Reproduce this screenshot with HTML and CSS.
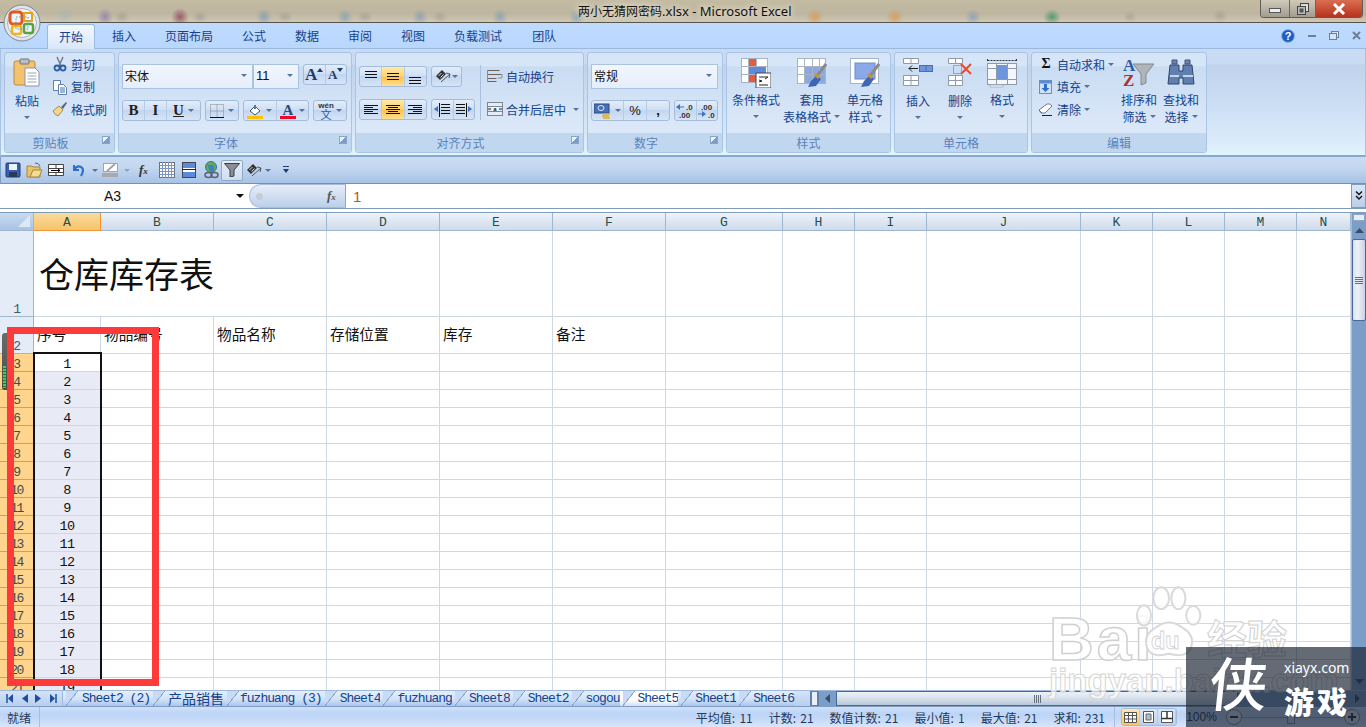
FILE: index.html
```
<!DOCTYPE html>
<html lang="zh">
<head>
<meta charset="utf-8">
<title>两小无猜网密码.xlsx - Microsoft Excel</title>
<link rel="stylesheet" href="styles.css">
</head>
<body>
<div class="app">
  <header class="titlebar">
    <div class="doc-title"><span class="doc-cjk">两小无猜网密码</span>.xlsx - Microsoft Excel</div>
    <div class="winbtns">
      <div class="wb wb-min"><svg width="12" height="6"><rect x=".5" y=".5" width="11" height="4" fill="#eee" stroke="#555"/></svg></div>
      <div class="wb wb-max"><svg width="12" height="12"><rect x="3.5" y=".5" width="8" height="8" fill="#ddd" stroke="#444"/><rect x=".5" y="3.5" width="8" height="8" fill="#bbb" stroke="#444"/><rect x="2.5" y="5.5" width="4" height="4" fill="#555"/></svg></div>
      <div class="wb wb-close"><svg width="14" height="12"><path d="M2 1l10 10M12 1L2 11" stroke="#fff" stroke-width="3"/></svg></div>
    </div>
  </header>

  <nav class="tabbar">
    <div class="tab tab-on">开始</div>
    <div class="tab">插入</div>
    <div class="tab">页面布局</div>
    <div class="tab">公式</div>
    <div class="tab">数据</div>
    <div class="tab">审阅</div>
    <div class="tab">视图</div>
    <div class="tab">负载测试</div>
    <div class="tab tab-last">团队</div>
    <div class="appbtns">
      <svg width="14" height="14" viewBox="0 0 14 14"><circle cx="7" cy="7" r="6.5" fill="#1e5fc4" stroke="#8fb4e8"/><text x="7" y="11" class="help-q">?</text></svg>
      <svg width="8" height="3"><rect width="8" height="2" y="1" fill="#6c7f99"/></svg>
      <svg width="10" height="9"><rect x="2.5" y=".5" width="7" height="6" fill="#d5e3f5" stroke="#6c7f99"/><rect x=".5" y="2.5" width="7" height="6" fill="#d5e3f5" stroke="#6c7f99"/></svg>
      <svg width="9" height="9"><path d="M1 1l7 7M8 1L1 8" stroke="#6c7f99" stroke-width="2"/></svg>
    </div>
  </nav>

  <section class="ribbon">
    <div class="group g1">
      <div class="gbody">
        <div class="tall w34">
          <svg class="i30" width="28" height="30" viewBox="0 0 28 30"><rect x="1" y="3" width="21" height="24" rx="2" fill="#f3c26f" stroke="#b98a3a"/><rect x="7" y="1" width="9" height="5" rx="1" fill="#b9bec6" stroke="#6d7580"/><path d="M12 10h10l4 4v14H12z" fill="#fff" stroke="#8795a8"/><path d="M14.500 15h9M14.500 18h9M14.500 21h9M14.500 24h9" stroke="#9aa5b5"/></svg>
          <div class="tl">粘贴</div>
          <div class="tl"><span class="caret"></span></div>
        </div>
        <div class="smcol ml8">
          <div class="sm"><svg class="i16" width="16" height="16" viewBox="0 0 16 16"><path d="M5 1l4 9M11 1L7 10" stroke="#6c7a8c" stroke-width="1.500"/><circle cx="5" cy="12" r="2.500" fill="none" stroke="#2e5da8" stroke-width="1.800"/><circle cx="11" cy="12" r="2.500" fill="none" stroke="#2e5da8" stroke-width="1.800"/></svg><span>剪切</span></div>
          <div class="sm"><svg class="i16" width="16" height="16" viewBox="0 0 16 16"><path d="M1.500 1.500h7v10h-7z" fill="#fff" stroke="#5d80b0"/><path d="M6.500 5.500h5l3 3v7h-8z" fill="#fff" stroke="#5d80b0"/><path d="M8 9h5M8 11h5M8 13h5" stroke="#3a6db0"/></svg><span>复制</span></div>
          <div class="sm"><svg class="i16" width="16" height="16" viewBox="0 0 16 16"><path d="M1 10l6-5 4 4-5 6q-3-1-5-5z" fill="#f0d88c" stroke="#a98b3c"/><path d="M9 6l5-5 1 1-4 6z" fill="#54688c"/></svg><span>格式刷</span></div>
        </div>
      </div>
      <div class="glabel gl-launch">剪贴板<span class="launch"></span></div>
    </div>

    <div class="group g2">
      <div class="gbody col pl3">
        <div class="frow mt11">
          <div class="combo w130">宋体<span class="caret"></span></div>
          <div class="combo w46 numtxt">11<span class="caret"></span></div>
          <div class="cluster ml4 w44">
            <div class="cell f1"><span class="growA">A</span><svg width="6" height="4" class="up"><path d="M0 4l3-4 3 4z" fill="#1d3d70"/></svg></div>
            <div class="cell f1"><span class="shrinkA">A</span><svg width="6" height="4" class="up"><path d="M0 0l3 4 3-4z" fill="#1d3d70"/></svg></div>
          </div>
        </div>
        <div class="frow mt11 gap4">
          <div class="cluster w79">
            <div class="cell f1"><b class="fmt">B</b></div>
            <div class="cell f1"><i class="fmt">I</i></div>
            <div class="cell f32"><u class="fmt fmtu">U</u><span class="caret ml4"></span></div>
          </div>
          <div class="cluster wc34">
            <div class="cell f1"><svg width="14" height="14"><path d="M.5.500h13v13H.5zM7 .5v13M.5 7h13" fill="none" stroke="#7c8794" stroke-dasharray="1 1"/><path d="M0 13.500h14" stroke="#111"/></svg><span class="caret ml4"></span></div>
          </div>
          <div class="cluster w66">
            <div class="cell f1"><svg width="16" height="16"><path d="M3 8l5-5 5 5-5 4z" fill="#fff" stroke="#44556e"/><path d="M7 2h2v4H7z" fill="#4a78bc"/><rect y="13" width="16" height="3" fill="#ffc000"/></svg><span class="caret ml3"></span></div>
            <div class="cell f1"><svg width="16" height="16"><text x="8" y="12" class="acolor">A</text><rect y="13" width="16" height="3" fill="#ee0a24"/></svg><span class="caret ml3"></span></div>
          </div>
          <div class="cluster wc34">
            <div class="cell f1"><span class="wen"><em>wén</em>文</span><span class="caret ml2"></span></div>
          </div>
        </div>
      </div>
      <div class="glabel gl-launch">字体<span class="launch"></span></div>
    </div>

    <div class="group g3">
      <div class="gbody pl3">
        <div class="col">
          <div class="frow mt13 gap4">
            <div class="cluster w68">
              <div class="cell f1"><svg width="14" height="14"><path d="M1 1.500h12M1 4.500h12M1 7.500h12" stroke="#111"/></svg></div>
              <div class="cell f1 hot"><svg width="14" height="14"><path d="M1 3.500h12M1 6.500h12M1 9.500h12" stroke="#111"/></svg></div>
              <div class="cell f1"><svg width="14" height="14"><path d="M1 7.500h12M1 10.500h12M1 13.500h12" stroke="#111"/></svg></div>
            </div>
            <div class="cluster w31">
              <div class="cell f1"><svg width="17" height="15" viewBox="0 0 17 15"><path d="M1 7l6-6 4 4-6 6z" fill="#333"/><path d="M3.500 7l3-3M5.500 8.500l3-3" stroke="#ddd"/><path d="M6 13l9-8M11 4l4 1-1 4" stroke="#555" fill="none"/></svg><span class="caret"></span></div>
            </div>
          </div>
          <div class="frow mt12 gap4">
            <div class="cluster w68">
              <div class="cell f1"><svg width="14" height="12"><path d="M0 1.500h14M0 3.500h9M0 5.500h14M0 7.500h9M0 9.500h14" stroke="#111"/></svg></div>
              <div class="cell f1 hot"><svg width="14" height="12"><path d="M0 1.500h14M2 3.500h10M0 5.500h14M2 7.500h10M0 9.500h14" stroke="#111"/></svg></div>
              <div class="cell f1"><svg width="14" height="12"><path d="M0 1.500h14M5 3.500h9M0 5.500h14M5 7.500h9M0 9.500h14" stroke="#111"/></svg></div>
            </div>
            <div class="cluster w44">
              <div class="cell f1"><svg width="16" height="14"><path d="M7 1.500h9M7 4.500h9M7 7.500h9M7 10.500h9M5.500 0v14" stroke="#111"/><path d="M0 6l4-3v6z" fill="#3f74bd"/></svg></div>
              <div class="cell f1"><svg width="16" height="14"><path d="M0 1.500h9M0 4.500h9M0 7.500h9M0 10.500h9M10.500 0v14" stroke="#111"/><path d="M16 6l-4-3v6z" fill="#3f74bd"/></svg></div>
            </div>
          </div>
        </div>
        <div class="wrapcol">
          <div class="sm"><svg class="i16" width="16" height="14" viewBox="0 0 16 14"><path d="M.5 1.500h12M.5 5.500h14M.5 9.500h9M.5 12.500h9" stroke="#6e6259"/><path d="M.5 1v12M15 5v4h-4" stroke="#8a8f96" fill="none"/></svg><span>自动换行</span></div>
          <div class="sm mt11"><svg class="i16" width="16" height="14" viewBox="0 0 16 14"><rect x=".5" y=".5" width="15" height="13" fill="#e6ecf5" stroke="#7b8697"/><path d="M.5 4.500h15M.5 9.500h15" stroke="#7b8697"/><rect x="5" y="5" width="6" height="4" fill="#fff"/><path d="M1 7h3M12 7h3" stroke="#222"/><text x="8" y="9" class="tinya">a</text></svg><span>合并后居中</span><span class="caret ml7"></span></div>
        </div>
      </div>
      <div class="glabel gl-launch">对齐方式<span class="launch"></span></div>
    </div>

    <div class="group g4">
      <div class="gbody col pl3">
        <div class="frow mt11">
          <div class="combo w127">常规<span class="caret"></span></div>
        </div>
        <div class="frow mt11 gap4">
          <div class="cluster w79">
            <div class="cell f34"><svg width="18" height="16" viewBox="0 0 18 16"><rect y="1" width="15" height="9" fill="#4470b5" stroke="#2b4d86"/><ellipse cx="7" cy="5" rx="3" ry="2.500" fill="none" stroke="#dbe6f7"/><path d="M9 11h7M8 13h7M9 15h7" stroke="#e4a929" stroke-width="1.600"/></svg><span class="caret ml3"></span></div>
            <div class="cell f23 pct">%</div>
            <div class="cell f23 pct"><b>,</b></div>
          </div>
          <div class="cluster w44">
            <div class="cell f1 dec"><svg width="18" height="16" viewBox="0 0 18 16"><path d="M0 4l4-3v6z" fill="#3f74bd"/><path d="M4 4h4" stroke="#3f74bd"/><text x="10" y="7" class="dectx">.0</text><text x="3" y="15" class="dectx">.00</text></svg></div>
            <div class="cell f1 dec"><svg width="18" height="16" viewBox="0 0 18 16"><path d="M8 11L4 8v6z" fill="#3f74bd"/><path d="M0 11h4" stroke="#3f74bd"/><text x="3" y="7" class="dectx">.00</text><text x="10" y="15" class="dectx">.0</text></svg></div>
          </div>
        </div>
      </div>
      <div class="glabel gl-launch">数字<span class="launch"></span></div>
    </div>

    <div class="group g5">
      <div class="gbody tallrow pl3">
        <div class="tall w52">
          <svg class="i30 i29" width="30" height="30" viewBox="0 0 30 30"><rect x=".5" y=".5" width="26" height="24" fill="#fff" stroke="#a8b4c4"/><path d="M0 8.500h26M0 16.500h26M7.500 0v25M15.500 0v25" stroke="#a8b4c4"/><rect x="8" y="1" width="7" height="7" fill="#e85a3c"/><rect x="8" y="9" width="17" height="7" fill="#5e8bd9"/><rect x="8" y="17" width="7" height="7" fill="#e85a3c"/><rect x="15" y="15" width="15" height="15" fill="#fff" stroke="#445"/><path d="M18 19h9M18 22l3 1-3 1M27 19l-3 2M18 27h9" stroke="#222" fill="none"/></svg>
          <div class="tl">条件格式</div>
          <div class="tl"><span class="caret"></span></div>
        </div>
        <div class="tall w59">
          <svg class="i30 i29" width="30" height="30" viewBox="0 0 30 30"><rect x=".5" y=".5" width="28" height="25" fill="#fff" stroke="#a8b4c4"/><rect x="7" y="8" width="21" height="17" fill="#8ba9e0"/><path d="M0 8.500h28M0 16.500h28M7.500 0v25M15.500 0v25M22.500 0v25" stroke="#a8b4c4"/><path d="M29 6l-9 12" stroke="#8a8a8a" stroke-width="3"/><path d="M20 17l-6 6-3 6 8-1 5-7z" fill="#3f66b4"/><path d="M18 16l4 4" stroke="#c8943c" stroke-width="3"/></svg>
          <div class="tl">套用</div>
          <div class="tl">表格格式<span class="caret ml3"></span></div>
        </div>
        <div class="tall w40 ml4">
          <svg class="i30 i29" width="30" height="30" viewBox="0 0 30 30"><rect x=".5" y=".5" width="28" height="25" fill="#fff" stroke="#a8b4c4"/><rect x="5" y="5" width="20" height="16" fill="#8ba9e8" stroke="#6a8acb"/><path d="M29 6l-9 12" stroke="#8a8a8a" stroke-width="3"/><path d="M20 17l-6 6-3 6 8-1 5-7z" fill="#3f66b4"/><path d="M18 16l4 4" stroke="#c8943c" stroke-width="3"/></svg>
          <div class="tl">单元格</div>
          <div class="tl">样式<span class="caret ml3"></span></div>
        </div>
      </div>
      <div class="glabel">样式</div>
    </div>

    <div class="group g6">
      <div class="gbody tallrow pl2">
        <div class="tall w42">
          <svg class="i30" width="30" height="30" viewBox="0 0 30 30"><path d="M.5.500h15v5H.5zM.5 17.500h15v5H.5z M.5 22.500h15v5H.5z M8 .5v5M8 17.500v10" fill="#fff" stroke="#8e9aab"/><path d="M6 10.500h9M6 10.500l3-3M6 10.500l3 3" stroke="#222" fill="none"/><rect x="16.500" y="7.500" width="13" height="6" fill="#6f96dd" stroke="#4a6eb0"/><path d="M23 7.500v6" stroke="#4a6eb0"/></svg>
          <div class="tl">插入</div>
          <div class="tl"><span class="caret"></span></div>
        </div>
        <div class="tall w42">
          <svg class="i30" width="26" height="30" viewBox="0 0 26 30"><path d="M1.500.500h14v5h-14zM1.500 17.500h14v5h-14zM1.500 22.500h14v5h-14zM8.500.5v5M8.500 17.500v10" fill="#fff" stroke="#8e9aab"/><rect x="6.500" y="7.500" width="8" height="8" fill="none" stroke="#5b6b82" stroke-dasharray="1 1"/><path d="M14 6l10 10M24 6L14 16" stroke="#ee4a2a" stroke-width="2"/></svg>
          <div class="tl">删除</div>
          <div class="tl"><span class="caret"></span></div>
        </div>
        <div class="tall w42">
          <svg class="i30 i29" width="30" height="30" viewBox="0 0 30 30"><path d="M.5 2.500h29M.5 1v3M29.500 1v3" stroke="#333" stroke-dasharray="2 1"/><rect x=".5" y="5.500" width="29" height="21" fill="#f4f7fb" stroke="#8e9aab"/><path d="M.5 10.500h29M.5 21.500h29M9.500 5v22M20.500 5v22" stroke="#8e9aab"/><rect x="10" y="7" width="10" height="14" fill="#6f96dd"/><path d="M3 27h13v2H3z" fill="#fff" stroke="#a8b4c4"/></svg>
          <div class="tl">格式</div>
          <div class="tl"><span class="caret"></span></div>
        </div>
      </div>
      <div class="glabel">单元格</div>
    </div>

    <div class="group g7">
      <div class="gbody pl6">
        <div class="smcol w80">
          <div class="sm"><span class="sigma">Σ</span><span>自动求和</span><span class="caret ml3"></span></div>
          <div class="sm"><svg class="i16" width="16" height="16" viewBox="0 0 16 16"><rect x="1.500" y="1.500" width="12" height="13" fill="#cfe0f8" stroke="#6d8fc0"/><rect x="1.500" y="1.500" width="12" height="3" fill="#5d8bd1"/><path d="M6 5h3v4h2.500l-4 4-4-4H6z" fill="#2d6fcf"/></svg><span>填充</span><span class="caret ml3"></span></div>
          <div class="sm"><svg class="i16" width="16" height="16" viewBox="0 0 16 16"><path d="M1 9l8-6q3-1 5 2l-7 7H3z" fill="#fff" stroke="#778"/><path d="M1 9l3 3" stroke="#778"/><path d="M4 14.500h10" stroke="#222"/></svg><span>清除</span><span class="caret ml3"></span></div>
        </div>
        <div class="tall w42">
          <svg class="i30 i29" width="32" height="30" viewBox="0 0 32 30"><text x="0" y="13" class="az aa">A</text><text x="0" y="28" class="az zz">Z</text><path d="M10 6h21l-8 10v9l-5 2V16z" fill="#b0b4bb" stroke="#85898f"/></svg>
          <div class="tl">排序和</div>
          <div class="tl">筛选<span class="caret ml3"></span></div>
        </div>
        <div class="tall w42">
          <svg class="i30 i29" width="28" height="30" viewBox="0 0 28 30"><path d="M5 2h5v4H5zM18 2h5v4h-5z" fill="#6d83a8" stroke="#3e5478"/><path d="M3 7h9v6h4V7h9l2 19H16v-6h-4v6H1z" fill="#5e7fb0" stroke="#2f466e"/><path d="M3 18h9M16 18h10" stroke="#c6d3e6" stroke-width="2"/></svg>
          <div class="tl">查找和</div>
          <div class="tl">选择<span class="caret ml3"></span></div>
        </div>
      </div>
      <div class="glabel">编辑</div>
    </div>
  </section>

  <section class="qat">
    <svg class="q1" width="16" height="16" viewBox="0 0 16 16"><rect x="1" y="1" width="14" height="14" rx="1" fill="#3b5fb0" stroke="#1e3a7a"/><rect x="4" y="2" width="8" height="6" fill="#eef2fa"/><rect x="4" y="10" width="8" height="5" fill="#2a3a5a"/></svg>
    <svg class="q2" width="17" height="16" viewBox="0 0 17 16"><path d="M1 4h5l1 1h7v10H1z" fill="#e9c26c" stroke="#a8863d"/><path d="M4 15l3-7h9l-3 7z" fill="#f6dc92" stroke="#a8863d"/><path d="M9 1q4 0 5 3" stroke="#2f6fc0" fill="none"/></svg>
    <svg class="q3" width="16" height="14" viewBox="0 0 16 14"><path d="M.5 1.500h15v11H.5zM.5 5.500h15M.5 9.500h15M8 1.500v4M8 9.500v3" fill="#fff" stroke="#444"/><path d="M3 7.500h9M10 6l2 1.500L10 9" fill="none" stroke="#000"/></svg>
    <svg class="q4" width="14" height="14" viewBox="0 0 14 14"><path d="M3 2v5h5" fill="none" stroke="#2f6fd0" stroke-width="2"/><path d="M3 7q3-5 7-3t0 9" fill="none" stroke="#2f6fd0" stroke-width="2.200"/></svg>
    <span class="caret q5"></span>
    <svg class="q6" width="17" height="14" viewBox="0 0 17 14"><rect x="1.500" y=".5" width="14" height="8" fill="#fff" stroke="#a5a5a5"/><path d="M5 8l8-7" stroke="#a5a5a5" stroke-width="2"/><rect y="10" width="16" height="4" fill="#a9a9a9"/></svg>
    <span class="caret q7"></span>
    <span class="fxq"><i>f</i><small>x</small></span>
    <svg class="q8" width="16" height="16"><rect x=".5" y=".5" width="15" height="15" fill="#fff" stroke="#68707c"/><path d="M.5 3.500h15M.5 6.500h15M.5 9.500h15M.5 12.500h15M3.500 0v16M6.500 0v16M9.500 0v16M12.500 0v16" stroke="#7e95bd"/></svg>
    <svg class="q9" width="14" height="16"><rect x=".5" y=".5" width="13" height="15" fill="#fff" stroke="#445"/><rect x="1" y="1" width="12" height="5" fill="#5e8bd9"/><rect x="1" y="10" width="12" height="5" fill="#5e8bd9"/><path d="M0 7.500h14" stroke="#222"/></svg>
    <svg class="q10" width="17" height="18" viewBox="0 0 17 18"><circle cx="8" cy="6" r="5.500" fill="#5caf52" stroke="#3c6ea8"/><path d="M4 3q3 2 5 1t2 4-4 2" fill="#3c80c8"/><ellipse cx="5.500" cy="14" rx="3.500" ry="2.500" fill="none" stroke="#5a6472" stroke-width="1.500"/><ellipse cx="11.500" cy="14" rx="3.500" ry="2.500" fill="none" stroke="#5a6472" stroke-width="1.500"/></svg>
    <div class="q11"><svg width="16" height="14" viewBox="0 0 16 14"><path d="M.5.500h15L10 7v6l-4 1V7z" fill="#8a8f96" stroke="#3a3f46"/></svg></div>
    <svg class="q12" width="17" height="15" viewBox="0 0 17 15"><path d="M1 7l6-6 4 4-6 6z" fill="#333"/><path d="M3.500 7l3-3M5.500 8.500l3-3" stroke="#ddd"/><path d="M6 13l9-8M11 4l4 1-1 4" stroke="#555" fill="none"/></svg>
    <span class="caret q13"></span>
    <svg class="q14" width="6" height="8"><path d="M0 .5h6" stroke="#1d3d70"/><path d="M0 3l3 4 3-4z" fill="#1d3d70"/></svg>
  </section>

  <section class="formula">
    <div class="namebox"><span>A3</span><i class="nb-caret"></i></div>
    <div class="fxzone"><i class="fxdot"></i><span class="fxq"><i>f</i><small>x</small></span></div>
    <div class="finput">1</div>
    <div class="fexpand"><svg width="8" height="10"><path d="M1 .5l3 3 3-3M1 5l3 3 3-3" stroke="#111" fill="none" stroke-width="1.400"/></svg></div>
  </section>
  <div class="fgap"></div>

  <main class="sheet">
    <div class="gridwrap">
      <table class="grid">
        <colgroup><col class="c0"><col class="ca"><col class="cb"><col class="cb"><col class="cb"><col class="cb"><col class="cb"><col class="cg"><col class="ch"><col class="ch"><col class="cj"><col class="ch"><col class="ch"><col class="ch"><col class="cn"></colgroup>
        <thead>
          <tr class="hrow"><th class="corner"><i></i></th><th class="hsel">A</th><th>B</th><th>C</th><th>D</th><th>E</th><th>F</th><th>G</th><th>H</th><th>I</th><th>J</th><th>K</th><th>L</th><th>M</th><th>N</th></tr>
        </thead>
        <tbody>
          <tr class="r1"><th class="rh">1</th><td class="title" colspan="3">仓库库存表</td><td></td><td></td><td></td><td></td><td></td><td></td><td></td><td></td><td></td><td></td><td></td></tr>
          <tr class="r2"><th class="rh">2</th><td>序号</td><td>物品编号</td><td>物品名称</td><td>存储位置</td><td>库存</td><td>备注</td><td></td><td></td><td></td><td></td><td></td><td></td><td></td><td></td></tr>
          <tr class="rn"><th class="rh sel">3</th><td class="num first">1</td><td></td><td></td><td></td><td></td><td></td><td></td><td></td><td></td><td></td><td></td><td></td><td></td><td></td></tr>
          <tr class="rn"><th class="rh sel">4</th><td class="num">2</td><td></td><td></td><td></td><td></td><td></td><td></td><td></td><td></td><td></td><td></td><td></td><td></td><td></td></tr>
          <tr class="rn"><th class="rh sel">5</th><td class="num">3</td><td></td><td></td><td></td><td></td><td></td><td></td><td></td><td></td><td></td><td></td><td></td><td></td><td></td></tr>
          <tr class="rn"><th class="rh sel">6</th><td class="num">4</td><td></td><td></td><td></td><td></td><td></td><td></td><td></td><td></td><td></td><td></td><td></td><td></td><td></td></tr>
          <tr class="rn"><th class="rh sel">7</th><td class="num">5</td><td></td><td></td><td></td><td></td><td></td><td></td><td></td><td></td><td></td><td></td><td></td><td></td><td></td></tr>
          <tr class="rn"><th class="rh sel">8</th><td class="num">6</td><td></td><td></td><td></td><td></td><td></td><td></td><td></td><td></td><td></td><td></td><td></td><td></td><td></td></tr>
          <tr class="rn"><th class="rh sel">9</th><td class="num">7</td><td></td><td></td><td></td><td></td><td></td><td></td><td></td><td></td><td></td><td></td><td></td><td></td><td></td></tr>
          <tr class="rn"><th class="rh sel">10</th><td class="num">8</td><td></td><td></td><td></td><td></td><td></td><td></td><td></td><td></td><td></td><td></td><td></td><td></td><td></td></tr>
          <tr class="rn"><th class="rh sel">11</th><td class="num">9</td><td></td><td></td><td></td><td></td><td></td><td></td><td></td><td></td><td></td><td></td><td></td><td></td><td></td></tr>
          <tr class="rn"><th class="rh sel">12</th><td class="num">10</td><td></td><td></td><td></td><td></td><td></td><td></td><td></td><td></td><td></td><td></td><td></td><td></td><td></td></tr>
          <tr class="rn"><th class="rh sel">13</th><td class="num">11</td><td></td><td></td><td></td><td></td><td></td><td></td><td></td><td></td><td></td><td></td><td></td><td></td><td></td></tr>
          <tr class="rn"><th class="rh sel">14</th><td class="num">12</td><td></td><td></td><td></td><td></td><td></td><td></td><td></td><td></td><td></td><td></td><td></td><td></td><td></td></tr>
          <tr class="rn"><th class="rh sel">15</th><td class="num">13</td><td></td><td></td><td></td><td></td><td></td><td></td><td></td><td></td><td></td><td></td><td></td><td></td><td></td></tr>
          <tr class="rn"><th class="rh sel">16</th><td class="num">14</td><td></td><td></td><td></td><td></td><td></td><td></td><td></td><td></td><td></td><td></td><td></td><td></td><td></td></tr>
          <tr class="rn"><th class="rh sel">17</th><td class="num">15</td><td></td><td></td><td></td><td></td><td></td><td></td><td></td><td></td><td></td><td></td><td></td><td></td><td></td></tr>
          <tr class="rn"><th class="rh sel">18</th><td class="num">16</td><td></td><td></td><td></td><td></td><td></td><td></td><td></td><td></td><td></td><td></td><td></td><td></td><td></td></tr>
          <tr class="rn"><th class="rh sel">19</th><td class="num">17</td><td></td><td></td><td></td><td></td><td></td><td></td><td></td><td></td><td></td><td></td><td></td><td></td><td></td></tr>
          <tr class="rn"><th class="rh sel">20</th><td class="num">18</td><td></td><td></td><td></td><td></td><td></td><td></td><td></td><td></td><td></td><td></td><td></td><td></td><td></td></tr>
          <tr class="rn"><th class="rh sel">21</th><td class="num">19</td><td></td><td></td><td></td><td></td><td></td><td></td><td></td><td></td><td></td><td></td><td></td><td></td><td></td></tr>
        </tbody>
      </table>
      <div class="selbox"></div>
      <div class="redbox"></div>
      <div class="sidegadget"><i></i></div>
    </div>
    <aside class="vscroll">
      <div class="vsplit"></div>
      <div class="varrow"><svg width="9" height="5"><path d="M0 5l4.500-5L9 5z" fill="#3b4c66"/></svg></div>
      <div class="vthumb"><i></i></div>
      <div class="vtrack"></div>
      <div class="varrow"><svg width="9" height="5"><path d="M0 0l4.500 5L9 0z" fill="#3b4c66"/></svg></div>
    </aside>
  </main>

  <section class="tabsrow">
    <div class="navs">
      <svg width="8" height="9"><path d="M1 0v9" stroke="#1e4f9c" stroke-width="1.500"/><path d="M7 0v9L2 4.500z" fill="#1e4f9c"/></svg>
      <svg width="6" height="9"><path d="M6 0v9L0 4.500z" fill="#1e4f9c"/></svg>
      <svg width="6" height="9"><path d="M0 0v9l6-4.500z" fill="#1e4f9c"/></svg>
      <svg width="8" height="9"><path d="M7 0v9" stroke="#1e4f9c" stroke-width="1.500"/><path d="M1 0v9l5-4.500z" fill="#1e4f9c"/></svg>
    </div>
    <div class="stabs">
      <div class="stab s-first">Sheet2 (2)</div>
      <div class="stab s-cjk">产品销售</div>
      <div class="stab s-16">fuzhuang (3)</div>
      <div class="stab s-18">Sheet4</div>
      <div class="stab">fuzhuang</div>
      <div class="stab">Sheet8</div>
      <div class="stab s-18">Sheet2</div>
      <div class="stab">sogou</div>
      <div class="stab s-on">Sheet5</div>
      <div class="stab">Sheet1</div>
      <div class="stab">Sheet6</div>
    </div>
    <div class="hsplit"><i></i></div>
    <div class="hscroll">
      <div class="harrow"><svg width="5" height="9"><path d="M5 0v9L0 4.500z" fill="#3b4c66"/></svg></div>
      <div class="hthumb"><i></i></div>
      <div class="htrack"></div>
      <div class="harrow"><svg width="5" height="9"><path d="M0 0v9l5-4.500z" fill="#3b4c66"/></svg></div>
    </div>
  </section>

  <footer class="status">
    <div class="st-ready">就绪</div>
    <div class="st-items">
      <span>平均值: 11</span>
      <span>计数: 21</span>
      <span>数值计数: 21</span>
      <span>最小值: 1</span>
      <span>最大值: 21</span>
      <span>求和: 231</span>
    </div>
    <div class="views">
      <div class="vb vb-on"><svg width="13" height="11"><path d="M.5.500h12v10H.5zM.5 3.500h12M.5 7h12M4.500 0v11M8.500 0v11" fill="#fff" stroke="#555"/></svg></div>
      <div class="vb"><svg width="11" height="12"><path d="M.5.500h10v11H.5z" fill="#fff" stroke="#555"/><path d="M3 3h5v6H3z" fill="#b5bcc8" stroke="#666"/></svg></div>
      <div class="vb"><svg width="12" height="12"><path d="M.5.500h11v11H.5z" fill="#fff" stroke="#555"/><path d="M.5 7.500h11M6 .5v7" stroke="#333" stroke-width="1.500"/></svg></div>
    </div>
    <div class="zoomtxt">100%</div>
    <div class="zoomctl">
      <svg width="16" height="16"><circle cx="8" cy="8" r="7.500" fill="#dce7f7" stroke="#7d8da6"/><path d="M4 8h8" stroke="#333" stroke-width="2"/></svg>
      <div class="zline"><i></i></div>
      <svg width="16" height="16"><circle cx="8" cy="8" r="7.500" fill="#dce7f7" stroke="#7d8da6"/><path d="M4 8h8M8 4v8" stroke="#333" stroke-width="2"/></svg>
    </div>
  </footer>

  <div class="orb">
    <svg width="38" height="38" viewBox="0 0 38 38"><circle cx="19" cy="19" r="18" fill="#dfe5ea" stroke="#7d8791"/><circle cx="19" cy="19" r="14.500" fill="#f2f5f7" stroke="#aab3bb"/><rect x="7" y="8" width="12" height="12" rx="3" fill="none" stroke="#e4571f" stroke-width="3"/><rect x="21" y="9" width="8" height="8" fill="none" stroke="#e8a21a" stroke-width="2"/><rect x="9" y="22" width="9" height="8" rx="2" fill="none" stroke="#f0b41c" stroke-width="2.500"/><rect x="21" y="20" width="9" height="9" rx="2" fill="none" stroke="#58a33a" stroke-width="2.500"/><path d="M13 13h12v12H13z" fill="none" stroke="#5d97c9" stroke-dasharray="1.500 1.500"/></svg>
  </div>

  <div class="baidu">
    <div class="bd-main">
      <span class="bd-bai">Bai</span>
      <svg class="bd-paw" width="72" height="80" viewBox="0 0 92 96"><g fill="rgba(255,255,255,.8)" stroke="#d9d9d9" stroke-width="2.500"><ellipse cx="14" cy="37" rx="9" ry="13"/><ellipse cx="36" cy="15" rx="10" ry="14"/><ellipse cx="58" cy="15" rx="9" ry="14"/><ellipse cx="77" cy="37" rx="9" ry="12"/><path d="M18 78q-6-16 12-26 16-12 32 0 18 10 12 26-4 14-28 8-24 6-28-8z"/></g><text x="23" y="80" class="bd-du">du</text></svg>
      <span class="bd-jy">经验</span>
    </div>
    <div class="bd-url">jingyan.baidu.com</div>
  </div>

  <div class="xia">
    <div class="xia-big">侠</div>
    <div class="xia-side">
      <div class="xia-url">xiayx.com</div>
      <div class="xia-game">游戏</div>
    </div>
  </div>
</div>
</body>
</html>
```

FILE: styles.css
```
* { box-sizing: border-box; }
html, body { margin: 0; padding: 0; }
body { width: 1366px; height: 727px; overflow: hidden; background: #fff; font: 12px "Noto Sans CJK SC", "Noto Sans", sans-serif; color: #15428b; }
.app { position: relative; width: 1366px; height: 727px; display: flex; flex-direction: column; overflow: hidden; }

/* title bar */
.titlebar { height: 23px; flex: none; display: flex; justify-content: space-between; border-bottom: 1px solid #56534c;
  background:
    radial-gradient(ellipse 8px 9px at 65px 16px, rgba(150,180,200,.45), transparent),
    radial-gradient(ellipse 8px 9px at 105px 17px, rgba(110,90,170,.5), transparent),
    radial-gradient(ellipse 8px 6px at 122px 17px, rgba(120,120,120,.3), transparent),
    radial-gradient(ellipse 9px 9px at 180px 17px, rgba(130,40,70,.65), transparent),
    radial-gradient(ellipse 8px 6px at 200px 17px, rgba(120,120,120,.35), transparent),
    radial-gradient(ellipse 8px 8px at 264px 17px, rgba(100,140,190,.55), transparent),
    radial-gradient(ellipse 8px 6px at 285px 17px, rgba(120,120,120,.3), transparent),
    radial-gradient(ellipse 8px 8px at 345px 17px, rgba(100,140,190,.5), transparent),
    radial-gradient(ellipse 8px 6px at 365px 17px, rgba(120,120,120,.3), transparent),
    radial-gradient(ellipse 8px 8px at 420px 17px, rgba(100,140,190,.5), transparent),
    radial-gradient(ellipse 8px 6px at 440px 17px, rgba(120,120,120,.3), transparent),
    radial-gradient(ellipse 8px 8px at 500px 17px, rgba(100,140,190,.5), transparent),
    radial-gradient(ellipse 8px 8px at 577px 17px, rgba(90,140,190,.5), transparent),
    radial-gradient(ellipse 9px 8px at 815px 17px, rgba(225,140,60,.6), transparent),
    radial-gradient(ellipse 9px 8px at 895px 17px, rgba(225,140,60,.6), transparent),
    radial-gradient(ellipse 8px 8px at 973px 17px, rgba(100,140,190,.5), transparent),
    radial-gradient(ellipse 9px 8px at 1052px 17px, rgba(40,140,90,.7), transparent),
    radial-gradient(ellipse 7px 6px at 1130px 17px, rgba(120,120,120,.3), transparent),
    radial-gradient(ellipse 8px 7px at 1220px 16px, rgba(120,120,120,.3), transparent),
    linear-gradient(#c4bba2, #bdb59e 60%, #cfc8b4);
}
.doc-title { padding: 2px 0 0 578px; font: 13px/18px "Noto Sans", "Noto Sans CJK SC", sans-serif; color: #111; white-space: nowrap; text-shadow: 0 0 6px #eee8d8, 0 0 6px #eee8d8; }
.doc-cjk { font-size: 12px; }
.winbtns { display: flex; margin-right: 3px; height: 18px; border: 1px solid #5e5d58; border-top: 0; border-radius: 0 0 4px 4px; width: 103px; overflow: hidden; }
.wb { display: flex; align-items: center; justify-content: center; background: linear-gradient(#d0cab9, #a09c90); border-right: 1px solid #666; }
.wb-min { width: 29px; padding-top: 4px; }
.wb-max { width: 26px; }
.wb-close { flex: 1; border: 0; background: linear-gradient(#d96e52, #b8321d); }

/* tabs */
.tabbar { height: 26px; flex: none; display: flex; padding-left: 47px; background: linear-gradient(#bfdbff, #b9d6fc); font-size: 12px; border-bottom: 1px solid #9ab9e0; }
.tab { padding: 0 12px; margin-right: 5px; line-height: 26px; height: 26px; }
.tab-on { background: linear-gradient(#f4f8fe, #d9e7f8); border: 1px solid #9ab9e0; border-bottom: 0; border-radius: 3px 3px 0 0; padding: 0 11px; color: #15428b; margin-top: 1px; height: 25px; line-height: 24px; }
.tab-last { margin-left: 1px; }
.appbtns { margin-left: auto; display: flex; align-items: center; gap: 13px; padding: 0 5px 0 0; }
.help-q { font: bold 11px "Liberation Sans", sans-serif; fill: #fff; text-anchor: middle; }

/* ribbon */
.ribbon { height: 108px; flex: none; display: flex; gap: 3px; padding: 3px 0 0 3px; margin: 0; border-bottom: 2px solid #8aa7cf; border-left: 1px solid #a7c3e6; border-right: 1px solid #a7c3e6;
  background: linear-gradient(#c8dbf3, #cadcf3 14%, #bfd3ec 15%, #cddff5 55%, #dcecfb 90%, #def6fd); }
.group { height: 101px; flex: none; display: flex; flex-direction: column; border: 1px solid #a9c4e4; border-radius: 3px; background: linear-gradient(#d5e4f7, #d6e5f7 13%, #c9dcf2 14%, #d4e3f6 50%, #e1ecfa); overflow: hidden; }
.g1 { width: 111px; } .g2 { width: 234px; } .g3 { width: 229px; } .g4 { width: 136px; } .g5 { width: 165px; } .g6 { width: 134px; } .g7 { width: 176px; }
.gbody { flex: 1; display: flex; min-height: 0; }
.g1 .gbody { padding-left: 5px; }
.col { flex-direction: column; }
.tallrow { align-items: flex-start; }
.pl2 { padding-left: 2px; } .pl3 { padding-left: 3px; } .pl6 { padding-left: 6px; }
.glabel { position: relative; height: 19px; line-height: 19px; text-align: center; color: #5a83ba; background: #c1d7f0; flex: none; }
.gl-launch { padding-right: 18px; }
.launch { position: absolute; right: 4px; top: 3px; width: 8px; height: 8px; border: 1px solid #88a4cb; background: linear-gradient(135deg, #eef4fc 45%, #7e9cc4 46%); }

.tall { display: flex; flex-direction: column; align-items: center; flex: none; padding-top: 5px; }
.i30 { display: block; flex: none; margin-bottom: 4px; }
.i29 { margin-bottom: 3px; }
.tl { height: 17px; line-height: 17px; white-space: nowrap; display: flex; align-items: center; justify-content: center; }
.w34 { width: 34px; } .w52 { width: 52px; } .w59 { width: 59px; } .w40 { width: 40px; } .w42 { width: 42px; }
.w80 { width: 80px; flex: none; }
.caret { display: inline-block; width: 0; height: 0; border: 3px solid transparent; border-top: 3px solid #56729e; border-bottom: 0; flex: none; }
.smcol { display: flex; flex-direction: column; }
.sm { height: 22px; display: flex; align-items: center; white-space: nowrap; flex: none; }
.smcol .sm:nth-child(2) { height: 23px; }
.i16 { flex: none; margin-right: 3px; }
.ml2 { margin-left: 2px; } .ml3 { margin-left: 3px; } .ml4 { margin-left: 4px; } .ml7 { margin-left: 7px; } .ml8 { margin-left: 8px; }
.mt11 { margin-top: 11px; } .mt12 { margin-top: 12px; } .mt13 { margin-top: 13px; }
.frow { display: flex; flex: none; }
.gap4 { gap: 4px; }
.combo { height: 25px; display: flex; align-items: center; justify-content: space-between; padding: 0 5px 2px 2px; background: linear-gradient(#f2f6fd, #e5eefb); border: 1px solid #abc3e2; color: #111; }
.w130 { width: 131px; } .w46 { width: 46px; } .w127 { width: 127px; }
.numtxt { font-family: "Liberation Sans", sans-serif; font-size: 13px; }
.cluster { height: 21px; display: flex; border: 1px solid #a3bcdc; border-radius: 3px; background: linear-gradient(#e3edfb, #cfdff4 45%, #c3d6ef 50%, #d6e4f6); overflow: hidden; flex: none; }
.w44 { width: 44px; } .w79 { width: 79px; } .wc34 { width: 34px; } .w66 { width: 66px; } .w68 { width: 68px; } .w31 { width: 31px; }
.cell { display: flex; align-items: center; justify-content: center; border-right: 1px solid #b5cae5; min-width: 0; }
.cell:last-child { border-right: 0; }
.f1 { flex: 1 1 0; } .f32 { flex: 0 0 33px; } .f34 { flex: 0 0 32px; } .f23 { flex: 1 1 0; }
.hot { background: linear-gradient(#ffeaa8, #ffd26a 50%, #ffc14d 55%, #ffe094); }
.growA { font: bold 17px "Liberation Serif", serif; color: #1f3b66; }
.shrinkA { font: bold 13px "Liberation Serif", serif; color: #1f3b66; }
.up { align-self: flex-start; margin-top: 3px; }
.fmt { font: bold 15px "Liberation Serif", serif; color: #222; }
.fmtu { font-family: "Liberation Serif", serif; }
.acolor { font: bold 15px "Liberation Serif", serif; fill: #2a4a88; text-anchor: middle; }
.wen { display: flex; flex-direction: column; align-items: center; line-height: 9px; font-size: 11px; color: #2c5aa0; }
.wen em { font: bold 8px/8px "Liberation Sans", sans-serif; color: #333; }
.tinya { font: bold 6px "Liberation Sans", sans-serif; text-anchor: middle; fill: #111; }
.pct { font: 13px "Liberation Sans", sans-serif; color: #111; }
.dectx { font: bold 8px "Liberation Sans", sans-serif; fill: #333; }
.wrapcol { margin-left: 5px; padding-left: 6px; border-left: 1px solid #a9c0dd; height: 55px; margin-top: 12px; display: flex; flex-direction: column; }
.sigma { width: 16px; margin-right: 3px; font: bold 14px "Liberation Serif", serif; color: #111; text-align: center; flex: none; }
.az { font: bold 17px "Liberation Serif", serif; }
.aa { fill: #2f5aa8; } .zz { fill: #a8322a; }

/* QAT */
.qat { height: 27px; flex: none; display: flex; align-items: center; padding: 0 0 0 4px; margin: 0; background: linear-gradient(#cbdcf2, #c3d7ef 40%, #a8c3e6); border-bottom: 1px solid #6f93c0; border-left: 1px solid #7f9fc8; }
.q1 { margin-right: 5px; } .q2 { margin-right: 5px; } .q3 { margin-right: 7px; } .q4 { margin-right: 7px; }
.q5 { margin-right: 4px; } .q6 { margin-right: 5px; } .q7 { margin-right: 9px; opacity: .5; }
.fxq { font: italic bold 13px "Liberation Serif", serif; color: #333; width: 14px; margin-right: 6px; flex: none; }
.fxq small { font-size: 9px; }
.q8 { margin-right: 7px; } .q9 { margin-right: 7px; } .q10 { margin-right: 1px; }
.q11 { width: 22px; height: 21px; display: flex; align-items: center; justify-content: center; background: linear-gradient(#e6eef9, #cfddf0); border: 1px solid #90a9c8; border-radius: 2px; margin-right: 3px; }
.q12 { margin-right: 2px; } .q13 { margin-right: 12px; }

/* formula */
.formula { height: 25px; flex: none; display: flex; background: #fff; border-bottom: 1px solid #7f9db9; }
.namebox { width: 248px; margin-left: 1px; display: flex; align-items: center; padding-left: 103px; font: 14px "Liberation Sans", sans-serif; color: #111; position: relative; }
.nb-caret { margin-left: auto; margin-right: 5px; border: 4px solid transparent; border-top: 4px solid #111; border-bottom: 0; }
.fxzone { width: 97px; display: flex; align-items: center; justify-content: space-between; padding: 0 0 0 6px; background: linear-gradient(#e6eef9, #bcd0ea); border-radius: 12px 0 0 12px; border: 1px solid #a7bddb; border-right: 1px solid #8ea7c8; }
.fxdot { width: 7px; height: 7px; border-radius: 50%; background: #c6ccd4; }
.fxzone .fxq { margin-right: 0; color: #555; width: 18px; }
.finput { flex: 1; padding-left: 7px; font: 15px/25px "Liberation Sans", sans-serif; color: #a8611c; }
.fexpand { width: 15px; display: flex; align-items: center; justify-content: center; background: linear-gradient(#dbe7f7, #b9cee9); border: 1px solid #7f9db9; }
.fgap { height: 4px; flex: none; background: #fff; border-bottom: 1px solid #7f9db9; }

/* sheet */
.sheet { flex: none; height: 477px; display: flex; }
.gridwrap { position: relative; width: 1351px; overflow: hidden; flex: none; background: #fff; }
.grid { table-layout: fixed; width: 1351px; border-collapse: separate; border-spacing: 0; color: #111; font-size: 14.67px; }
.c0 { width: 34px; } .ca { width: 67px; } .cb { width: 113px; } .cg { width: 117px; } .ch { width: 72px; } .cj { width: 154px; } .cn { width: 54px; }
.grid td, .grid th { padding: 0; overflow: hidden; white-space: nowrap; }
.grid td { border-right: 1px solid #d0d7e5; border-bottom: 1px solid #d0d7e5; padding: 0 3px; }
.grid .hrow th { height: 18px; padding-top: 3px; font: 13px/14px "Liberation Mono", monospace; color: #254e4e; background: linear-gradient(#f0f4fa, #dde6f2 50%, #cfdcec); border-right: 1px solid #9eb6ce; border-bottom: 1px solid #9eb6ce; }
.grid .hrow th.hsel { background: linear-gradient(#f9dc9e, #f8cf83 50%, #f6c36c); border-bottom: 1px solid #f29536; border-right: 1px solid #f29536; color: #254e4e; }
.grid .hrow .corner { position: relative; background: linear-gradient(#c9daf0, #a9c3e6); }
.corner i { position: absolute; right: 3px; bottom: 3px; width: 0; height: 0; border-left: 12px solid transparent; border-bottom: 12px solid #dfe8f5; }
.rh { font: 13px/12px "Liberation Mono", monospace; letter-spacing: -1.5px; color: #3e5c6e; background: #e4ecf7; border-right: 1px solid #9eb6ce; border-bottom: 1px solid #9eb6ce; vertical-align: bottom; text-align: center; }
.rh.sel { background: #ffd58d; border-right: 1px solid #f29536; border-bottom: 1px solid #f29536; color: #3d4c50; }
.r1 { height: 86px; } .r2 { height: 37px; } .rn { height: 18px; }
.grid .title { font-size: 35px; line-height: 40px; padding: 0 0 2px 5px; }
.grid .r2 td { line-height: 20px; padding-bottom: 2px; }
.grid .num { font: 13.5px/12px "Liberation Mono", monospace; letter-spacing: -.7px; text-align: center; background: #e8ebf5; vertical-align: bottom; height: 18px; }
.grid .num.first { background: #fff; }
.selbox { position: absolute; left: 33px; top: 139px; width: 69px; height: 360px; border: 2px solid #111; pointer-events: none; }
.redbox { position: absolute; left: 7px; top: 114px; width: 152px; height: 359px; border: 7px solid #ff3a3a; }
.sidegadget { position: absolute; left: 2px; top: 120px; width: 5px; height: 57px; border-radius: 3px 0 0 3px; background: linear-gradient(#6b6b68, #4a4a48); }
.sidegadget i { display: block; margin: 33px 1px 0; height: 22px; background: repeating-linear-gradient(#35d060 0 2px, #1c7a38 2px 3px); }
.vscroll { width: 15px; flex: none; display: flex; flex-direction: column; background: #7b9ec8; border-left: 1px solid #a8bedb; }
.vsplit { height: 7px; margin: 1px 1px 0; background: #e6edf7; border: 1px solid #8ea7c8; flex: none; }
.varrow { height: 18px; display: flex; align-items: center; justify-content: center; flex: none; }
.vthumb { height: 82px; flex: none; background: linear-gradient(90deg, #d9e2ee, #eef2f7 40%, #c6d2e2); border: 1px solid #46689a; border-radius: 2px; display: flex; align-items: center; justify-content: center; }
.vthumb i { width: 8px; height: 7px; background: repeating-linear-gradient(#66707e 0 1px, transparent 1px 2px); }
.vtrack { flex: 1; }

/* sheet tabs */
.tabsrow { height: 17px; flex: none; display: flex; background: linear-gradient(#d4e3f8, #b8cfee); border-top: 1px solid #9fb9dc; border-bottom: 1px solid #7f9bc4; overflow: hidden; }
.navs { width: 63px; flex: none; display: flex; align-items: center; justify-content: space-between; padding: 0 5px 0 6px; border-right: 1px solid #9fb9dc; }
.stabs { display: flex; width: 747px; flex: none; font: 13px/15px "Liberation Mono", monospace; letter-spacing: -1px; color: #15428b; }
.stab { padding: 0 0 0 17px; position: relative; background: linear-gradient(#e4eefc, #d2e2f8 55%, #a9c6ee); white-space: nowrap; }
.stab::before { content: ""; position: absolute; left: 3px; top: 0; bottom: 0; width: 12px; background: linear-gradient(to top left, transparent 48%, #8aa5cc 49%, #8aa5cc 53%, #c9dbf4 54%); }
.s-first { padding-left: 19px; }
.s-cjk { font: 14px/15px "Noto Sans CJK SC", sans-serif; letter-spacing: 0; padding-left: 18px; }
.s-16 { padding-left: 16px; }
.s-18 { padding-left: 18px; }
.s-on { background: linear-gradient(#fff, #fff 60%, #cfe0f7); padding-left: 18px; }
.hsplit { width: 9px; flex: none; background: #5f80ad; display: flex; padding: 1px 2px; }
.hsplit i { flex: 1; background: #eaf0f8; }
.hscroll { flex: 1; display: flex; background: #7b9ec8; }
.harrow { width: 17px; flex: none; display: flex; align-items: center; justify-content: center; }
.hthumb { width: 402px; flex: none; background: linear-gradient(#eef2f7, #d9e2ee 45%, #b9c7d9); border: 1px solid #46689a; display: flex; align-items: center; justify-content: center; }
.hthumb i { width: 7px; height: 8px; background: repeating-linear-gradient(90deg, #66707e 0 1px, transparent 1px 2px); }
.htrack { flex: 1; }

/* status */
.status { height: 20px; flex: none; display: flex; align-items: center; color: #1e395b; background: linear-gradient(#cfe0f8, #bcd4f6 35%, #c4d9f7 60%, #d8e6fa); }
.st-ready { width: 40px; padding-left: 7px; line-height: 22px; border-right: 1px solid #a7bfe0; height: 20px; flex: none; }
.st-items { width: 1075px; flex: none; display: flex; justify-content: flex-end; gap: 16px; padding-right: 9px; height: 20px; line-height: 22px; border-right: 1px solid #a7bfe0; white-space: nowrap; word-spacing: 1.5px; }
.views { display: flex; width: 56px; height: 18px; margin-left: 6px; border: 1px solid #a3bcdc; border-radius: 3px; flex: none; overflow: hidden; background: linear-gradient(#dbe7f8, #bdd2ef); }
.vb { flex: 1; display: flex; align-items: center; justify-content: center; border-right: 1px solid #b5cae5; }
.vb-on { background: linear-gradient(#ffe9a9, #ffc35a); }
.zoomtxt { width: 49px; text-align: center; font: 12px "Liberation Sans", sans-serif; flex: none; }
.zoomctl { display: flex; align-items: center; flex: none; width: 134px; }
.zline { flex: 1; height: 1px; background: #8fa6c4; position: relative; }
.zline i { position: absolute; left: 45px; top: -6px; width: 8px; height: 13px; background: #cfdcee; border: 1px solid #7d8da6; }

/* overlays */
.orb { position: absolute; left: 3px; top: 4px; width: 38px; height: 38px; }
.baidu { position: absolute; left: 1049px; top: 582px; width: 250px; color: rgba(255,255,255,.8); pointer-events: none; }
.bd-main { display: flex; align-items: flex-end; height: 82px; }
.bd-bai { font: bold 62px/62px "Liberation Sans", sans-serif; -webkit-text-stroke: 1.500px #d0d0d0; letter-spacing: 3px; width: 84px; flex: none; white-space: nowrap; margin-bottom: -6px; }
.bd-paw { flex: none; }
.bd-du { font: bold 30px "Liberation Sans", sans-serif; fill: #fff; stroke: #d0d0d0; }
.bd-jy { font: bold 40px/48px "Noto Sans CJK SC", sans-serif; -webkit-text-stroke: 1px #d0d0d0; white-space: nowrap; margin-left: 2px; margin-bottom: 3px; }
.bd-url { font: bold 33px/34px "Liberation Sans", sans-serif; color: rgba(255,255,255,.7); -webkit-text-stroke: 1px #d6d6d6; white-space: nowrap; }
.xia { position: absolute; left: 1186px; top: 647px; width: 180px; height: 80px; background: rgba(22,30,45,.66); display: flex; color: #fff; overflow: hidden; }
.xia-big { width: 98px; height: 66px; font: 500 58px/60px "Noto Sans CJK SC", sans-serif; text-align: center; transform: skewX(-6deg); padding-left: 8px; flex: none; padding-top: 4px; overflow: hidden; }
.xia-side { display: flex; flex-direction: column; padding-top: 11px; }
.xia-url { font: 14px/20px "Noto Sans", sans-serif; }
.xia-game { font: 900 30px/36px "Noto Sans CJK SC", sans-serif; margin-top: 4px; letter-spacing: 3px; white-space: nowrap; }
```
